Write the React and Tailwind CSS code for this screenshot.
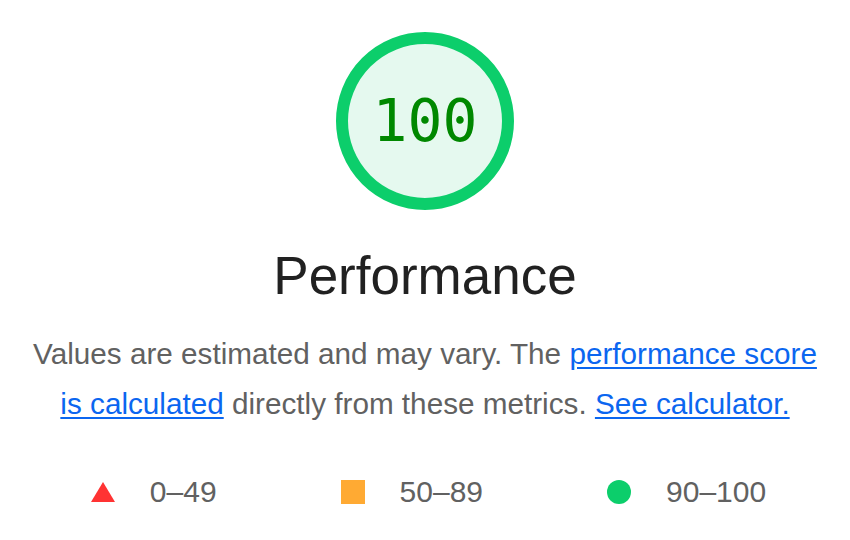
import React from "react";

const Legend = ({ icon, label }) => (
  <div className="flex items-center gap-[35px]">
    {icon}
    <span className="text-[30px] leading-[40px] text-[#616161]">{label}</span>
  </div>
);

const App = () => {
  return (
    <div className="w-[850px] h-[540px] bg-white flex flex-col items-center font-['Liberation_Sans',Arial,sans-serif]">
      {/* gauge */}
      <div className="mt-[32px] w-[178px] h-[178px] rounded-full border-[12px] border-[#0cce6b] bg-[#e5f9ef] flex items-center justify-center">
        <span className="font-['DejaVu_Sans_Mono',monospace] text-[58px] leading-none text-[#008800]">
          100
        </span>
      </div>

      <h2 className="mt-[39px] text-[53px] leading-[53px] text-[#212121]">Performance</h2>

      <p className="mt-[27px] w-[800px] text-center text-[29.7px] leading-[50px] text-[#616161]">
        Values are estimated and may vary. The{" "}
        <a href="#" className="text-[#0b66f0] underline underline-offset-[3px]">
          performance score is calculated
        </a>{" "}
        directly from these metrics.{" "}
        <a href="#" className="text-[#0b66f0] underline underline-offset-[3px]">
          See calculator.
        </a>
      </p>

      <div className="mt-[43px] ml-[7px] flex items-center gap-[124px]">
        <Legend
          label="0–49"
          icon={
            <svg width="24" height="20" viewBox="0 0 24 20">
              <polygon points="12,0 24,20 0,20" fill="#ff3333" />
            </svg>
          }
        />
        <Legend label="50–89" icon={<div className="w-[24px] h-[24px] bg-[#ffaa33]" />} />
        <Legend label="90–100" icon={<div className="w-[24px] h-[24px] rounded-full bg-[#0cce6b]" />} />
      </div>
    </div>
  );
};

export default App;
